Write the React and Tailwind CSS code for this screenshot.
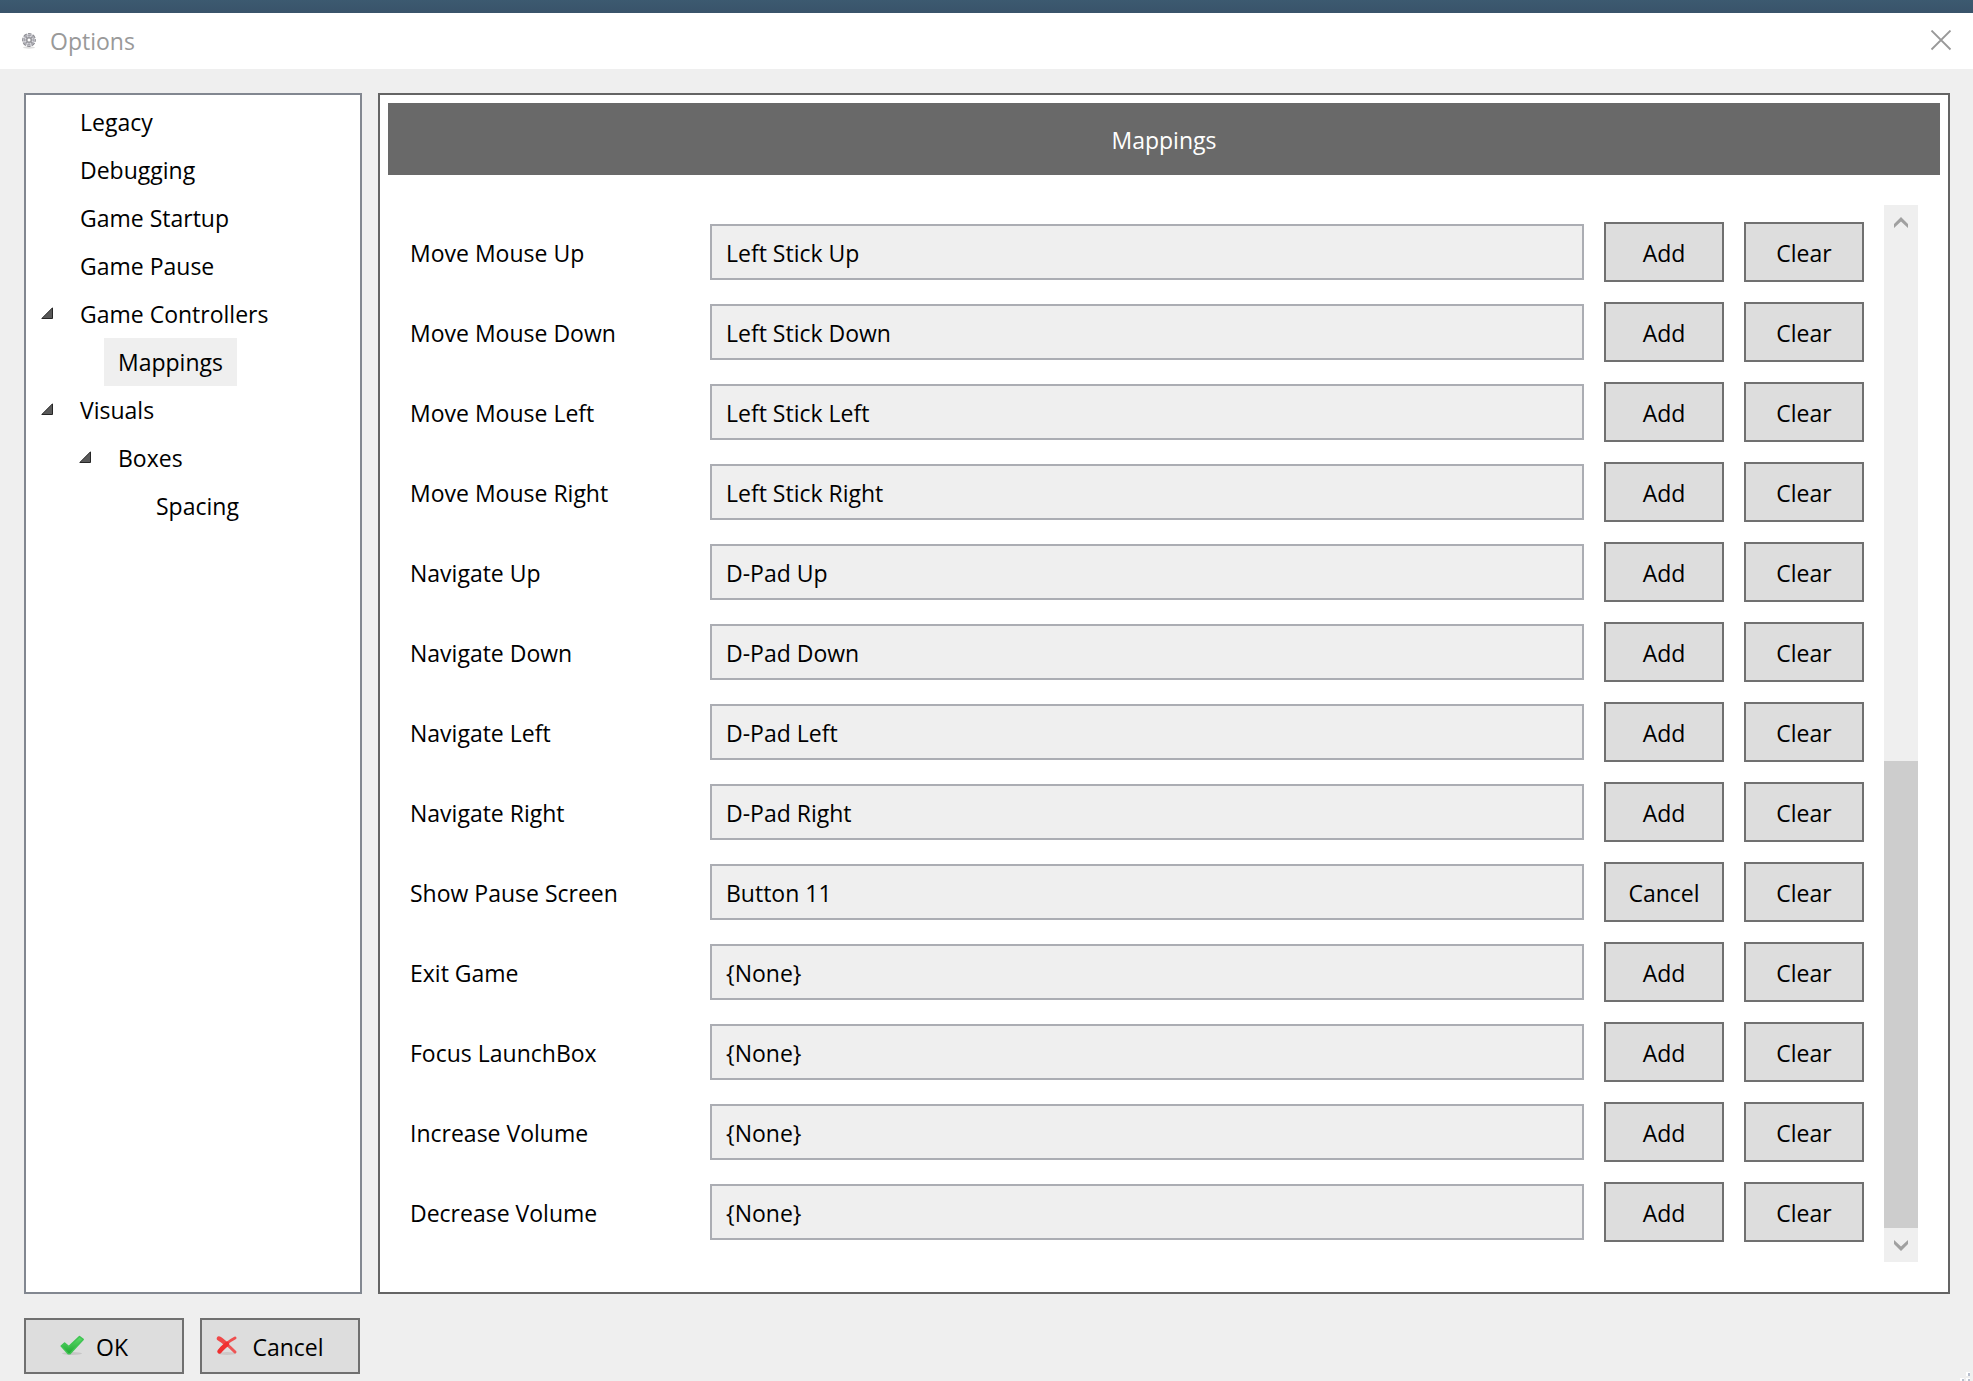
import { useState } from 'react';

const initialMappings = [
  { id: 'mouse-up', label: 'Move Mouse Up', value: 'Left Stick Up' },
  { id: 'mouse-down', label: 'Move Mouse Down', value: 'Left Stick Down' },
  { id: 'mouse-left', label: 'Move Mouse Left', value: 'Left Stick Left' },
  { id: 'mouse-right', label: 'Move Mouse Right', value: 'Left Stick Right' },
  { id: 'nav-up', label: 'Navigate Up', value: 'D-Pad Up' },
  { id: 'nav-down', label: 'Navigate Down', value: 'D-Pad Down' },
  { id: 'nav-left', label: 'Navigate Left', value: 'D-Pad Left' },
  { id: 'nav-right', label: 'Navigate Right', value: 'D-Pad Right' },
  { id: 'pause-screen', label: 'Show Pause Screen', value: 'Button 11' },
  { id: 'exit-game', label: 'Exit Game', value: '{None}' },
  { id: 'focus', label: 'Focus LaunchBox', value: '{None}' },
  { id: 'volume-up', label: 'Increase Volume', value: '{None}' },
  { id: 'volume-down', label: 'Decrease Volume', value: '{None}' },
];

const tree = [
  { label: 'Legacy' },
  { label: 'Debugging' },
  { label: 'Game Startup' },
  { label: 'Game Pause' },
  { label: 'Game Controllers', children: [{ label: 'Mappings' }] },
  { label: 'Visuals', children: [{ label: 'Boxes', children: [{ label: 'Spacing' }] }] },
];

const GearIcon = () => (
  <svg className="h-4 w-4" viewBox="0 0 16 16" fill="none">
    <ellipse cx="8" cy="14.500" rx="6" ry="1.200" fill="#dedede" />
    <circle cx="8" cy="7" r="5.600" fill="#d9d9de" stroke="#8d8d93" strokeWidth="2.600" strokeDasharray="3.400 1" strokeDashoffset="1.700" />
    <circle cx="8" cy="7" r="5.400" stroke="#c9c9d0" strokeWidth="1" />
    <path d="M8 2v10M3 7h10M4.500 3.500l7 7M11.500 3.500l-7 7" stroke="#a3a3aa" strokeWidth="1" />
    <rect x="6" y="5" width="4" height="4" fill="#fff" stroke="#77777d" strokeWidth="1" />
  </svg>
);

const CheckIcon = () => (
  <svg className="h-6 w-6" viewBox="0 0 24 24">
    <defs>
      <linearGradient id="check-fill" x1="0" y1="0" x2="0" y2="1">
        <stop offset="0" stopColor="#5fdc6c" />
        <stop offset="1" stopColor="#1fa832" />
      </linearGradient>
    </defs>
    <ellipse cx="12" cy="18.500" rx="10" ry="1.500" fill="#c6c6c6" />
    <path
      d="M1.200 11 4.600 8l4.200 3.600L19.500 1.500l3.700 2.900L10 18.800H8.200z"
      fill="url(#check-fill)"
      stroke="#3fc452"
      strokeWidth="1.500"
      strokeLinejoin="round"
    />
  </svg>
);

const CrossIcon = () => (
  <svg className="h-6 w-6" viewBox="0 0 24 24" fill="none" strokeLinecap="round">
    <ellipse cx="11" cy="18.500" rx="9" ry="1.500" fill="#cdc8c8" />
    <path d="M3 3.500C8 6 13 11 19 17" stroke="#ee5555" strokeWidth="3" />
    <path d="M3 3.500C6 5 8 7 10.500 9.500" stroke="#f04848" strokeWidth="4.500" />
    <path d="M19 3C14 5.500 8 10 3.500 16.500" stroke="#ee4f4f" strokeWidth="3" />
    <path d="M11 9C8 11.500 5.500 13.500 3.500 16.500" stroke="#f03030" strokeWidth="4.500" />
  </svg>
);

const Chevron = ({ down }) => (
  <svg className="h-3 w-4" viewBox="0 0 16 12" fill="#a0a0a0">
    {down ? <path d="M1 1l7 6.500L15 1v4L8 12 1 5z" /> : <path d="M1 12l7-6.500L15 12V8L8 1 1 8z" />}
  </svg>
);

const TreeNode = ({ node, selected, onSelect }) => {
  const [open, setOpen] = useState(true);

  return (
    <li>
      <div className="flex h-12 items-center">
        <div className="w-[27px] pb-[2px] pl-[2px]">
          {node.children && (
            <button type="button" aria-label={`Toggle ${node.label}`} onClick={() => setOpen(!open)} className="block">
              <svg className="h-3 w-3" viewBox="0 0 12 12">
                <path d="M.8 11.500 11.500.8v10.700z" fill="#595959" stroke="#262626" />
              </svg>
            </button>
          )}
        </div>
        <button
          type="button"
          onClick={() => onSelect(node.label)}
          className={selected === node.label ? 'h-12 bg-[#efefef] px-[14px]' : 'h-12 px-[14px]'}
        >
          {node.label}
        </button>
      </div>
      {node.children && open && (
        <ul className="pl-[38px]">
          {node.children.map((child) => (
            <TreeNode key={child.label} node={child} selected={selected} onSelect={onSelect} />
          ))}
        </ul>
      )}
    </li>
  );
};

const MappingRow = ({ mapping, listening, onListen, onClear }) => (
  <div className="grid grid-cols-[280px_1fr_120px_120px] items-center gap-5">
    <label htmlFor={mapping.id} className="pt-[2px]">{mapping.label}</label>
    <input
      id={mapping.id}
      type="text"
      readOnly
      value={mapping.value}
      className="h-14 w-full min-w-0 border-2 border-[#abadb3] bg-[#efefef] px-[14px] pt-[2px]"
    />
    <button type="button" onClick={onListen} className="h-[60px] border-2 border-[#707070] bg-[#dddddd] pt-[2px]">
      {listening ? 'Cancel' : 'Add'}
    </button>
    <button type="button" onClick={onClear} className="h-[60px] border-2 border-[#707070] bg-[#dddddd] pt-[2px]">
      Clear
    </button>
  </div>
);

const App = () => {
  const [mappings, setMappings] = useState(initialMappings);
  const [listening, setListening] = useState('pause-screen');
  const [selected, setSelected] = useState('Mappings');

  const clearMapping = (id) => {
    setMappings(mappings.map((m) => (m.id === id ? { ...m, value: '{None}' } : m)));
  };

  return (
    <div className="flex min-h-screen flex-col bg-[#efefef] font-['Open_Sans',sans-serif] text-[23px] leading-8 text-black">
      <div className="h-[13px] bg-gradient-to-b from-[#3c5a70] to-[#39536a]" />
      <header className="flex h-14 items-center justify-between bg-white px-[21px] text-[#999999]">
        <div className="flex items-center gap-[13px]">
          <GearIcon />
          <h1>Options</h1>
        </div>
        <button type="button" aria-label="Close">
          <svg className="h-[22px] w-[22px]" viewBox="0 0 22 22" stroke="#999999" strokeWidth="1.800">
            <path d="M1.500 .500l19 19M20.500 .500l-19 19" />
          </svg>
        </button>
      </header>

      <div className="flex flex-1 gap-4 pt-6 pr-[23px] pl-6">
        <nav className="w-[338px] shrink-0 border-2 border-[#828790] bg-white pt-[3px]">
          <ul className="pl-[13px]">
            {tree.map((node) => (
              <TreeNode key={node.label} node={node} selected={selected} onSelect={setSelected} />
            ))}
          </ul>
        </nav>

        <main className="flex min-w-0 flex-1 flex-col border-2 border-[#646464] bg-white">
          <h2 className="mx-2 mt-2 flex h-[72px] items-center justify-center bg-[#696969] pt-[2px] text-white">Mappings</h2>
          <div className="flex flex-1 gap-5 p-[30px]">
            <div className="flex min-w-0 flex-1 flex-col gap-5 pt-[17px] pb-5">
              {mappings.map((m) => (
                <MappingRow
                  key={m.id}
                  mapping={m}
                  listening={listening === m.id}
                  onListen={() => setListening(listening === m.id ? null : m.id)}
                  onClear={() => clearMapping(m.id)}
                />
              ))}
            </div>
            <div className="flex w-[34px] flex-col bg-[#efefef]">
              <button type="button" aria-label="Scroll up" className="flex h-[34px] items-center justify-center">
                <Chevron />
              </button>
              <div className="flex flex-1 flex-col">
                <div className="flex-[522]" />
                <div className="flex-[467] bg-[#cdcdcd]" />
              </div>
              <button type="button" aria-label="Scroll down" className="flex h-[34px] items-center justify-center">
                <Chevron down />
              </button>
            </div>
          </div>
        </main>
      </div>

      <footer className="flex items-end justify-between pt-6 pl-6">
        <div className="flex gap-4 pb-[7px]">
          <button type="button" className="flex h-14 w-40 items-center justify-center gap-3 border-2 border-[#707070] bg-[#dddddd] pt-[2px] pr-5">
            <CheckIcon />
            OK
          </button>
          <button type="button" className="flex h-14 w-40 items-center justify-center gap-3 border-2 border-[#707070] bg-[#dddddd] pt-[2px] pr-5">
            <CrossIcon />
            Cancel
          </button>
        </div>
        <svg className="h-[9px] w-[16px]" viewBox="0 0 16 9" fill="#b8bfce">
          <path d="M9 0h4v4H9zM3 6h4v3H3zM9 6h4v3H9z" fill="#fff" />
          <path d="M11 1h2v3h-2zM5 7h2v2H5zM11 7h2v2h-2z" />
        </svg>
      </footer>
    </div>
  );
};

export default App;
